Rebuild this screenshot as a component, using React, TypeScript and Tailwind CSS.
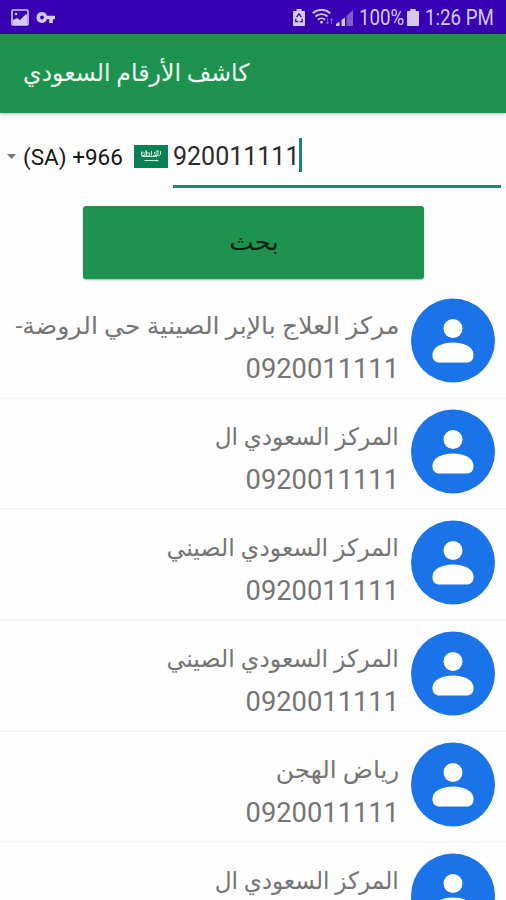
import React from 'react';

type Contact = {
  name: string;
  phone: string;
  fit: string;
};

const contacts: Contact[] = [
  { name: 'مركز العلاج بالإبر الصينية حي الروضة-', phone: '0920011111', fit: 'scale-x-[1.048]' },
  { name: 'المركز السعودي ال', phone: '0920011111', fit: 'scale-x-[.965]' },
  { name: 'المركز السعودي الصيني', phone: '0920011111', fit: 'scale-x-[.985]' },
  { name: 'المركز السعودي الصيني', phone: '0920011111', fit: 'scale-x-[.985]' },
  { name: 'رياض الهجن', phone: '0920011111', fit: 'scale-x-[1.035]' },
  { name: 'المركز السعودي ال', phone: '0920011111', fit: 'scale-x-[.965]' },
];

const StatusBar: React.FC = () => (
  <div className="flex h-[34px] shrink-0 items-center justify-between bg-[#3700b3] pl-[11px] pr-[11px] text-[#d6c9f1]">
    <div className="flex items-center gap-[7px]">
      {/* Picture */}
      <svg width="18" height="17" viewBox="0 0 18 17">
        <rect x="1" y="1" width="16" height="15" rx="1" fill="none" stroke="currentColor" strokeWidth="1.6" />
        <circle cx="5" cy="5" r="1.2" fill="currentColor" />
        <path d="M2 11 6 9l3 2 6-6 1 1v10H2z" fill="currentColor" />
      </svg>
      {/* Key */}
      <svg width="19" height="13" viewBox="0 0 19 13">
        <path
          d="M6 1a5.4 5.4 0 1 0 5 7.3h2.2V12h3.6V8.3H19V4.7h-8A5.4 5.4 0 0 0 6 1zm0 3.6a1.9 1.9 0 1 1 0 3.8 1.9 1.9 0 0 1 0-3.8z"
          fill="currentColor"
          fillRule="evenodd"
        />
      </svg>
    </div>

    <div className="flex items-center">
      {/* Battery with recycle mark */}
      <svg className="mr-[7px]" width="12" height="17" viewBox="0 0 12 17">
        <path d="M3.5 0h5v2H11a1 1 0 0 1 1 1v13a1 1 0 0 1-1 1H1a1 1 0 0 1-1-1V3a1 1 0 0 1 1-1h2.5z" fill="currentColor" />
        <path d="M3.6 8.2 6 4.8l2.4 3.4M2.8 9.8v2.8h2.4M9.2 9.8v2.8H6.8" fill="none" stroke="#3700b3" strokeWidth="1.3" />
      </svg>
      {/* Wifi */}
      <svg className="mr-[2px]" width="22" height="17" viewBox="0 0 22 17">
        <g fill="none" stroke="currentColor" strokeWidth="1.9">
          <path d="M.8 4.2a13 13 0 0 1 17.4 0" />
          <path d="M3.4 7.5a9 9 0 0 1 12.2 0" />
          <path d="M6 10.7a5.2 5.2 0 0 1 7 0" />
        </g>
        <circle cx="9.5" cy="13.2" r="1.4" fill="currentColor" />
        <path d="M15.5 9.5v5M14 13l1.5 2 1.5-2M19.5 15v-5M18 11.5l1.5-2 1.5 2" fill="none" stroke="currentColor" strokeOpacity=".4" />
      </svg>
      {/* Signal */}
      <svg className="mr-[6px]" width="17" height="17" viewBox="0 0 17 17">
        <path d="M0 17v-2l3.5-2.5V17zM5.5 17v-6L9 8.5V17z" fill="currentColor" />
        <path d="M10.5 17V7L17 1v16z" fill="currentColor" fillOpacity=".45" />
      </svg>
      <span className="w-[46px] origin-left scale-x-[.85] whitespace-nowrap pt-px font-[Roboto,sans-serif] text-[22px] leading-none">100%</span>
      {/* Battery */}
      <svg className="ml-[2px] mr-[6px]" width="12" height="17" viewBox="0 0 11 17" preserveAspectRatio="none">
        <path d="M3 0h5v2h2a1 1 0 0 1 1 1v13a1 1 0 0 1-1 1H1a1 1 0 0 1-1-1V3a1 1 0 0 1 1-1h2z" fill="currentColor" />
      </svg>
      <span className="w-[70px] origin-left scale-x-[.85] whitespace-nowrap pt-px font-[Roboto,sans-serif] text-[22px] leading-none">1:26 PM</span>
    </div>
  </div>
);

const Avatar: React.FC = () => (
  <svg className="shrink-0 overflow-visible" width="84" height="84" viewBox="0 0 84 84">
    <circle cx="42" cy="41.5" r="42" fill="#1a73e8" />
    <circle cx="42" cy="29.5" r="9.5" fill="#fff" />
    <path d="M21.5 55.5C21.5 47.5 32 43.5 42 43.5s20.5 4 20.5 12v1c0 4.5-3 7-7 7h-27c-4 0-7-2.5-7-7z" fill="#fff" />
  </svg>
);

const SaudiFlag: React.FC = () => (
  <svg width="34" height="23" viewBox="0 0 34 23">
    <rect width="34" height="23" fill="#0b7f54" />
    <g fill="none" stroke="#fff" strokeOpacity=".8" strokeWidth="1">
      <path d="M7.5 6.5v4H11V7M9 6.5V9M12.5 6v5h3V7.5M14 7v2M17.5 6v4.5M19 10.5h3v-4M20.5 7v2M24 6v4.5h-2M26.5 6v3.5L24.5 11M8 11.5h15M11 6h2M22 6h3" />
      <path d="M10.5 15.5h14M22.5 14.8v1.8" />
    </g>
  </svg>
);

const App: React.FC = () => {
  return (
    <div className="flex h-[900px] w-[506px] flex-col overflow-hidden bg-[#fefefe] font-[Roboto,'DejaVu_Sans',sans-serif]">
      <StatusBar />

      <header className="flex h-[79px] shrink-0 items-center bg-[#1e924f] pb-[2px] pl-[23px] shadow-[0_1px_3px_rgba(0,0,0,0.3)]">
        <h1 dir="rtl" className="origin-left scale-x-[.985] whitespace-nowrap text-[24px] leading-none text-[#f2fbf5]">
          كاشف الأرقام السعودي
        </h1>
      </header>

      {/* Phone number entry */}
      <div className="flex h-[75px] shrink-0 pl-[7px] pr-[5px]">
        <div className="flex h-[86px] items-center">
          <svg width="9" height="5" viewBox="0 0 9 5">
            <path d="M0 0h9L4.5 5z" fill="#757575" />
          </svg>
          <span className="ml-[7px] w-[111px] whitespace-nowrap pt-[3px] text-[22.5px] leading-none text-[#161616]">(SA) +966</span>
          <SaudiFlag />
        </div>
        <div className="ml-[5px] flex h-[75px] flex-1 items-center border-b-[3px] border-[#288471] pt-[12px]">
          <span className="whitespace-nowrap pt-[2px] text-[25px] leading-none text-[#2b2b2b]">920011111</span>
          <span className="h-[34px] w-[3px] bg-[#168672]" />
        </div>
      </div>

      <button className="mx-auto mt-[18px] flex h-[73px] w-[341px] shrink-0 items-center justify-center rounded-[3px] bg-[#1e924f] text-[24px] leading-none text-[#0b1c11] shadow-[0_1px_2px_rgba(0,0,0,0.3)]">
        <span className="scale-x-[1.08] pb-[2px] pl-[2px]">بحث</span>
      </button>

      <ul dir="rtl" className="mt-[9px] shrink-0">
        {contacts.map((contact, index) => (
          <li key={index} className="flex h-[111px] items-start gap-[12px] border-b-2 border-[#f6f6f6] px-[11px] pt-[11px]">
            <Avatar />
            <div className="flex flex-col items-start text-[#757575]">
              <span className={`h-[43px] origin-right whitespace-nowrap text-[24px] leading-[54px] ${contact.fit}`}>
                {contact.name}
              </span>
              <span className="h-[43px] whitespace-nowrap text-[27.3px] leading-[54px]">{contact.phone}</span>
            </div>
          </li>
        ))}
      </ul>
    </div>
  );
};

export default App;
